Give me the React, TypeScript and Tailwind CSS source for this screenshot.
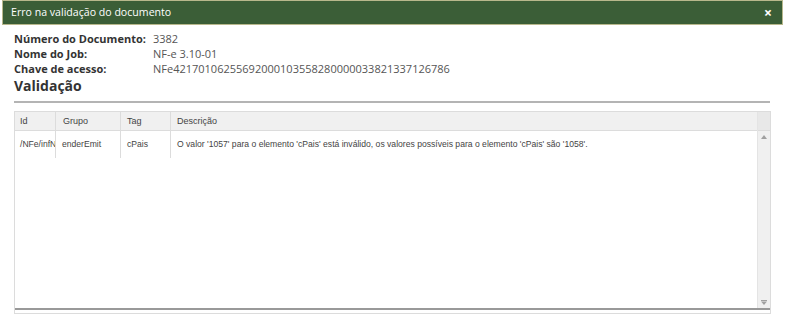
export default function App() {
  return (
    <div className="h-[329px] w-[785px] overflow-hidden bg-white font-['Open_Sans',sans-serif]">
      <div className="mx-[2px] flex h-[25px] items-center justify-between border border-[#b8b88c] bg-[#3b5e37] pl-[8px] pr-[10px]">
        <span className="text-[10.6px] text-white">Erro na validação do documento</span>
        <span className="text-[14px] font-bold leading-none text-white">×</span>
      </div>

      <div className="px-[14px] pt-[6px]">
        <div className="grid grid-cols-[139px_1fr] whitespace-nowrap text-[11px] leading-[15px]">
          <span className="font-bold text-[#333]">Número do Documento:</span>
          <span className="text-[#555]">3382</span>
          <span className="font-bold text-[#333]">Nome do Job:</span>
          <span className="text-[#555]">NF-e 3.10-01</span>
          <span className="font-bold text-[#333]">Chave de acesso:</span>
          <span className="text-[#555]">NFe42170106255692000103558280000033821337126786</span>
        </div>
        <h2 className="text-[14px] font-bold leading-[20px] text-[#333]">Validação</h2>
        <div className="mr-[1px] mt-[5px] border-t-2 border-[#b4b4b4]" />

        <div className="mt-[8px] border border-[#dcdcdc] font-['Liberation_Sans',sans-serif] text-[8.6px] text-[#444]">
          <div className="flex">
            <div className="flex-1">
              <div className="flex h-[19px] items-center border-b border-[#dcdcdc] bg-[#f0f0f0] text-[9px]">
                <div className="w-[41px] border-r border-[#dcdcdc] pl-[5px] leading-[18px]">Id</div>
                <div className="w-[65px] border-r border-[#dcdcdc] pl-[7px] leading-[18px]">Grupo</div>
                <div className="w-[50px] border-r border-[#dcdcdc] pl-[6px] leading-[18px]">Tag</div>
                <div className="flex-1 pl-[6px] leading-[18px]">Descrição</div>
              </div>
              <div className="flex h-[27px]">
                <div className="w-[41px] overflow-hidden whitespace-nowrap border-r border-[#dcdcdc] pl-[5px] leading-[27px]">/NFe/infNFe</div>
                <div className="w-[65px] border-r border-[#dcdcdc] pl-[6px] leading-[27px]">enderEmit</div>
                <div className="w-[50px] border-r border-[#dcdcdc] pl-[6px] leading-[27px]">cPais</div>
                <div className="flex-1 whitespace-nowrap pl-[6px] leading-[27px]">
                  O valor '1057' para o elemento 'cPais' está inválido, os valores possíveis para o elemento 'cPais' são '1058'.
                </div>
              </div>
              <div className="h-[150px]" />
            </div>
            <div className="flex w-[13px] flex-col border-l border-[#e4e4e4] bg-[#f0f0f0]">
              <div className="h-[19px] border-b border-[#dcdcdc] bg-[#e8e8e8]" />
              <div className="flex h-[12px] items-center justify-center">
                <svg width="6" height="4" viewBox="0 0 6 4"><path d="M3 0L6 4H0z" fill="#a0a0a0" /></svg>
              </div>
              <div className="flex-1" />
              <div className="flex h-[12px] items-center justify-center">
                <svg width="6" height="5" viewBox="0 0 6 5"><rect x="0" y="0" width="6" height="1" fill="#a0a0a0" /><path d="M0 1.5H6L3 5z" fill="#a0a0a0" /></svg>
              </div>
            </div>
          </div>
          <div className="border-t-2 border-[#999]" />
          <div className="h-[3px]" />
        </div>
      </div>
    </div>
  );
}
